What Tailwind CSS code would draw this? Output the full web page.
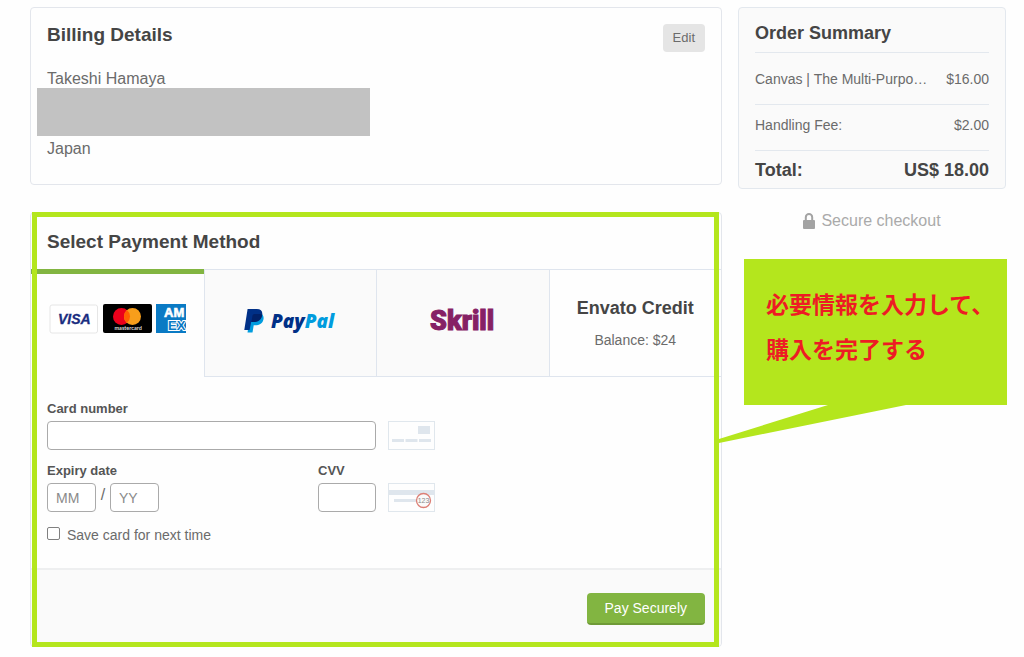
<!DOCTYPE html>
<html lang="en">
<head>
<meta charset="utf-8">
<meta name="viewport" content="width=device-width, initial-scale=1">
<title>Checkout</title>
<script src="https://cdn.jsdelivr.net/npm/@tailwindcss/browser@4"></script>
</head>
<body class="bg-[#fefefe] font-['Liberation_Sans',Arial,sans-serif] text-[#6b6b6b]">
<div class="grid grid-cols-[minmax(0,1fr)_268px] items-start gap-4 pt-[7px] pr-[18px] pl-[30px]">
  <main>
    <section class="rounded border border-[#e3e6ec] px-4 pt-4 pb-[22px]">
      <div class="flex items-start justify-between">
        <div>
          <h2 class="text-[19px] leading-[22px] font-bold text-[#454545]">Billing Details</h2>
          <p class="mt-6 text-base leading-[18px]">Takeshi Hamaya</p>
        </div>
        <button type="button" class="rounded bg-[#e5e5e5] px-[10px] text-[13px] leading-7">Edit</button>
      </div>
      <div class="-ml-[10px] h-12 w-[333px] bg-[#c2c2c2]"></div>
      <p class="text-base leading-[26px]">Japan</p>
    </section>

    <section class="relative mt-[27px] rounded border border-[#e3e6ec]">
      <h2 class="px-4 pt-[18px] pb-4 text-[19px] leading-[22px] font-bold text-[#454545]">Select Payment Method</h2>

      <div role="tablist" class="grid h-[108px] grid-cols-4">
        <button type="button" role="tab" aria-selected="true" aria-label="Credit card" class="flex flex-col items-start border-t-5 border-[#82b541] pt-[30px] pl-[18px]">
          <svg class="h-[30px] w-[138px]" viewBox="0 0 138 30">
            <rect x="1" y="1" width="47.500" height="28" rx="2" fill="#fff" stroke="#e6e6e6"/>
            <text x="9" y="20" font-family="Liberation Sans, sans-serif" font-size="14" font-weight="700" font-style="italic" fill="#1a2d80" stroke="#1a2d80" stroke-width=".3">VISA</text>
            <rect x="54" y="0" width="49" height="29" rx="2" fill="#000"/>
            <circle cx="72.500" cy="12.500" r="8.500" fill="#eb001b"/>
            <circle cx="83.500" cy="12.500" r="8.500" fill="#f79e1b"/>
            <path d="M78 6a8.500 8.500 0 0 1 0 13a8.500 8.500 0 0 1 0-13" fill="#ff5f00"/>
            <text x="65.500" y="26" font-family="Lato, sans-serif" font-size="5.500" font-weight="700" fill="#ddd">mastercard</text>
            <svg x="107" y="0" width="30" height="29">
              <rect width="30" height="29" fill="#0a7ac4"/>
              <g font-family="Liberation Sans, sans-serif" font-size="13" font-weight="700">
                <text x="8" y="13" fill="#fff" stroke="#fff" stroke-width=".6">AM</text>
                <text x="12" y="26" fill="#0a7ac4" stroke="#fff" stroke-width="2" paint-order="stroke">EX</text>
              </g>
            </svg>
          </svg>
        </button>
        <button type="button" role="tab" aria-label="PayPal" class="flex items-center justify-center border border-r-0 border-[#dfe5ee] bg-[#fafafa]">
          <svg class="mb-1 h-7 w-[92px]" viewBox="0 0 92 28">
            <path d="M6.500 6h9.500c3.500 1.500 4.200 4.200 3.200 7.300c-1 3.500-3.800 5-8 5h-1.500l-1.200 7.200H3.500z" fill="#009cde"/>
            <path d="M3.600 2h9.200c4.600 0 6.300 3 5.200 7c-1.100 4.300-4.100 6-8.300 6H7.200L5.600 23H.3z" fill="#003087"/>
            <path d="M8.500 8.800C8.700 7.700 9.500 7 10.600 7h5c1.100 0 1.900.2 2.600.6c-.9 5-4 7.400-8.500 7.400H7.400z" fill="#012169"/>
            <text x="27" y="21" font-family="Open Sans, sans-serif" font-size="19" font-weight="800" font-style="italic" fill="#003087">Pay<tspan fill="#009cde">Pal</tspan></text>
          </svg>
        </button>
        <button type="button" role="tab" aria-label="Skrill" class="flex items-center justify-center border border-r-0 border-[#dfe5ee] bg-[#fafafa]">
          <svg class="mb-1 h-9 w-[68px]" viewBox="0 0 68 36">
            <text x="1" y="27" font-family="Roboto, sans-serif" font-size="27" font-weight="900" fill="#862165" stroke="#862165" stroke-width="1">Skrill</text>
          </svg>
        </button>
        <button type="button" role="tab" class="border border-r-0 border-[#dfe5ee] pt-[2px]">
          <span class="block text-lg leading-6 font-bold text-[#454545]">Envato Credit</span>
          <span class="mt-2 block text-sm leading-6">Balance: $24</span>
        </button>
      </div>

      <form>
        <div class="px-4 pt-6 pb-[22px]">
          <label for="card" class="block text-[13px] leading-4 font-bold text-[#555]">Card number</label>
          <div class="mt-1 flex gap-3">
            <input id="card" type="text" class="h-[29px] w-[329px] rounded border border-[#aaa] bg-white px-2">
            <svg class="h-[29px] w-[47px]" viewBox="0 0 47 29">
              <rect x=".5" y=".5" width="46" height="28" fill="#fefefe" stroke="#e0e7ed"/>
              <path d="M30 5h12v8H30zM4 18h12v3H4zM17.500 18h12v3h-12zM31 18h12v3H31z" fill="#dfe6ed"/>
            </svg>
          </div>
          <div class="mt-[13px] flex items-end gap-3">
            <div class="flex w-[329px] justify-between">
              <fieldset>
                <legend class="text-[13px] leading-4 font-bold text-[#555]">Expiry date</legend>
                <div class="mt-1 flex">
                  <input type="text" aria-label="Expiry month" placeholder="MM" class="h-[29px] w-[49px] rounded border border-[#aaa] bg-white px-2 text-sm placeholder:text-[#8a8a8a]">
                  <span class="w-[14px] text-center text-base leading-6">/</span>
                  <input type="text" aria-label="Expiry year" placeholder="YY" class="h-[29px] w-[49px] rounded border border-[#aaa] bg-white px-2 text-sm placeholder:text-[#8a8a8a]">
                </div>
              </fieldset>
              <div>
                <label for="cvv" class="block text-[13px] leading-4 font-bold text-[#555]">CVV</label>
                <input id="cvv" type="text" class="mt-1 block h-[29px] w-[58px] rounded border border-[#aaa] bg-white px-2">
              </div>
            </div>
            <svg class="h-[29px] w-[47px]" viewBox="0 0 47 29">
              <rect x=".5" y=".5" width="46" height="28" fill="#fefefe" stroke="#e0e7ed"/>
              <path d="M1 7h45v5H1zM6 16h23v3H6z" fill="#dfe6ed"/>
              <circle cx="35.500" cy="17.500" r="7" fill="#fafafa" stroke="#dc7f76" stroke-width="1.300"/>
              <text x="35.500" y="20" text-anchor="middle" font-family="Liberation Sans, sans-serif" font-size="7" fill="#8c8c8c">123</text>
            </svg>
          </div>
          <label class="mt-3 flex items-start text-sm leading-[22px]">
            <input type="checkbox" class="mt-[3px] mr-[7px] size-[13px] appearance-none rounded-xs border border-[#808080] bg-white checked:bg-[#82b541]">
            Save card for next time
          </label>
        </div>
        <div class="flex justify-end rounded-b border-t-2 border-[#eeeff0] bg-[#fafafa] px-4 pt-[23px] pb-[21px]">
          <button type="submit" class="rounded border-b-2 border-[#6f9a37] bg-[#82b541] px-[18px] text-sm leading-[30px] text-white">Pay Securely</button>
        </div>
      </form>
      <div class="pointer-events-none absolute -top-px right-[2px] -bottom-px left-px border-5 border-[#b4e61d]"></div>
    </section>
  </main>

  <aside>
    <section class="rounded border border-[#e3e8ee] bg-[#fafafa] px-4 pt-[14px] pb-2 text-sm leading-5">
      <h2 class="border-b border-[#e3e8ee] pb-2 text-lg leading-[22px] font-bold text-[#454545]">Order Summary</h2>
      <dl>
        <div class="flex justify-between border-b border-[#e3e8ee] pt-4 pb-[15px]">
          <dt>Canvas | The Multi-Purpo…</dt>
          <dd>$16.00</dd>
        </div>
        <div class="flex justify-between border-b border-[#e3e8ee] pt-[10px] pb-[15px]">
          <dt>Handling Fee:</dt>
          <dd>$2.00</dd>
        </div>
        <div class="flex justify-between pt-[9px] text-lg leading-5 font-bold text-[#454545]">
          <dt>Total:</dt>
          <dd>US$ 18.00</dd>
        </div>
      </dl>
    </section>
    <p class="mt-5 flex items-center justify-center gap-[6px] text-base leading-6 text-[#aaa]">
      <svg class="h-4 w-3" viewBox="0 0 12 16"><path d="M2.800 7V4.200a3.200 3.200 0 0 1 6.400 0V7" fill="none" stroke="#a3a3a3" stroke-width="2"/><rect y="7" width="12" height="9" rx="1" fill="#a3a3a3"/></svg>
      Secure checkout
    </p>
    <div lang="ja" class="relative mt-[26px] -mr-px ml-[6px] bg-[#b4e61d] pt-[22px] pb-[34px] pl-[22px] font-['Noto_Sans_CJK_JP',sans-serif] text-[23px] leading-[45px] font-bold whitespace-nowrap text-[#ed1c24]">
      <p>必要情報を入力して、</p>
      <p>購入を完了する</p>
      <svg class="absolute top-full -left-[25px] h-[38px] w-[188px]" viewBox="0 0 188 38"><path d="M109 0h78L0 38v-4z" fill="#b4e61d"/></svg>
    </div>
  </aside>
</div>
</body>
</html>
